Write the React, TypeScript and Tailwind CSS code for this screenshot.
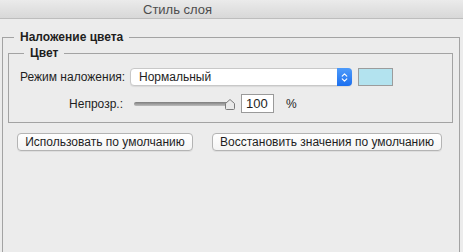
import { LuChevronsUpDown } from "react-icons/lu";

const font = { fontFamily: '"Liberation Sans", Arial, sans-serif' };

const SliderThumb = () => (
  <svg width="10" height="11" viewBox="0 0 10 11" className="absolute right-[-1px] top-[-3px]">
    <path
      d="M5 0.5 L9.5 4.5 L9.5 9.5 Q9.5 10.5 8.5 10.5 L1.5 10.5 Q0.5 10.5 0.5 9.5 L0.5 4.5 Z"
      fill="#e9e9e9"
      stroke="#7a7a7a"
      strokeWidth="1"
    />
  </svg>
);

const MacButton = ({ label, width }: { label: string; width: string }) => (
  <button
    className={
      "h-[18px] whitespace-nowrap rounded-[4px] border border-[#b4b4b4] bg-gradient-to-b from-white to-[#f4f4f4] text-[12px] leading-none text-[#1e1e1e] shadow-[0_1px_0_rgba(0,0,0,0.06)] " +
      width
    }
  >
    {label}
  </button>
);

export default function App() {
  return (
    <div className="h-[252px] w-[463px] overflow-hidden bg-[#ececec] text-[#1e1e1e]" style={font}>
      {/* window title */}
      <div className="flex h-[19px] items-center border-b border-[#bdbdbd] bg-gradient-to-b from-[#ebebeb] to-[#d8d8d8]">
        <span className="ml-[143px] text-[13px] leading-none text-[#4d4d4d]">Стиль слоя</span>
      </div>

      <fieldset className="ml-[2px] mt-[11px] h-[260px] w-[458px] border border-[#a3a3a3]">
        <legend className="ml-[11px] px-[6px] text-[12px] font-bold leading-[14px]">Наложение цвета</legend>

        <fieldset className="ml-[5px] mr-[6px] mt-[2px] border border-[#a3a3a3] pb-[9px]">
          <legend className="ml-[15px] px-[6px] text-[12px] font-bold leading-[14px]">Цвет</legend>

          <div className="mt-[8px] flex h-[18px] items-center pl-[11px]">
            <span className="w-[100px] whitespace-nowrap text-[12px] leading-none">Режим наложения:</span>
            <div className="ml-[10px] flex h-[18px] w-[222px] items-center rounded-[4px] border border-[#c8c8c8] bg-white shadow-[0_1px_1px_rgba(0,0,0,0.08)]">
              <span className="flex-1 pl-[8px] text-[12px] leading-none">Нормальный</span>
              <div className="-mr-px flex h-[18px] w-[15px] items-center justify-center rounded-r-[4px] bg-gradient-to-b from-[#4e9bfa] to-[#1b6fef]">
                <LuChevronsUpDown className="text-white" size={11} strokeWidth={2.5} />
              </div>
            </div>
            <div className="ml-[6px] h-[18px] w-[35px] border border-[#9c9c9c] bg-[#b3e3ef]" />
          </div>

          <div className="mt-[8px] flex h-[19px] items-center">
            <span className="w-[114px] text-right text-[12px] leading-none">Непрозр.:</span>
            <div className="relative ml-[11px] h-[4px] w-[100px] rounded-full bg-gradient-to-b from-[#7d7d7d] to-[#bdbdbd]">
              <SliderThumb />
            </div>
            <div className="ml-[7px] flex h-[19px] w-[33px] items-center border border-[#9a9a9a] bg-white pl-[4px] text-[13px] leading-none">
              100
            </div>
            <span className="ml-[12px] text-[12px] leading-none">%</span>
          </div>
        </fieldset>

        <div className="ml-[14px] mt-[10px] flex gap-[19px]">
          <MacButton label="Использовать по умолчанию" width="w-[176px]" />
          <MacButton label="Восстановить значения по умолчанию" width="w-[230px]" />
        </div>
      </fieldset>
    </div>
  );
}
